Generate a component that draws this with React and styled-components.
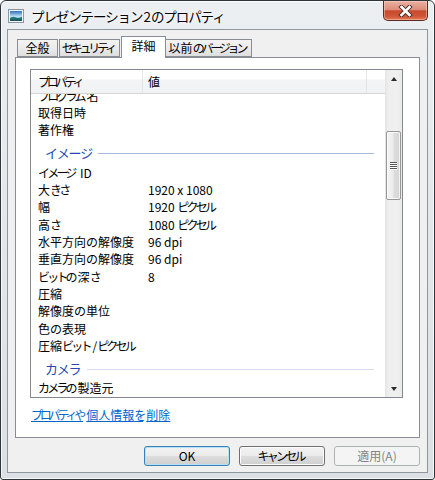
import styled, { createGlobalStyle } from "styled-components";

const GlobalStyle = createGlobalStyle`
  html, body {
    margin: 0;
    padding: 0;
    background: #ffffff;
  }
  body {
    font-family: "Noto Sans CJK JP", "Noto Sans", sans-serif;
    font-size: 12px;
    color: #000;
  }
  * {
    box-sizing: border-box;
  }
`;

// Meiryo UI draws kana much narrower than kanji; tighten kana runs to match
const Kana = styled.span`
  letter-spacing: ${(p) => p.$ls}px;
  margin-right: ${(p) => -p.$ls}px;
`;

const KANA_RUN = /([\u3040-\u30FF]+)/;

function Jp({ children, ls = -2.8 }) {
  return String(children)
    .split(KANA_RUN)
    .map((part, i) =>
      i % 2 === 1 ? (
        <Kana key={i} $ls={ls}>
          {part}
        </Kana>
      ) : (
        part
      )
    );
}

const Window = styled.div`
  width: 435px;
  height: 480px;
  border: 1px solid #30353a;
  border-radius: 6px 6px 3px 3px;
  background: linear-gradient(180deg, #eceff2 0%, #e4e7eb 40%, #dcdfe3 100%);
  box-shadow: inset 0 0 0 1px rgba(255, 255, 255, 0.75);
  display: flex;
  flex-direction: column;
  padding: 0 6px 6px 6px;
  overflow: hidden;
`;

const TitleBar = styled.div`
  height: 28px;
  display: flex;
  align-items: flex-start;
`;

const TitleIcon = styled.div`
  margin: 8px 0 0 1px;
  width: 16px;
  height: 14px;
  display: flex;
`;

const TitleText = styled.div`
  margin: 5px 0 0 7px;
  font-size: 13.5px;
  line-height: 20px;
  color: #000;
  white-space: nowrap;
  text-shadow: 0 0 6px #fff, 0 0 3px #fff;
`;

const CloseButton = styled.div`
  margin-left: auto;
  width: 45px;
  height: 20px;
  border: 1px solid #5b2a22;
  border-top: none;
  border-radius: 0 0 5px 5px;
  background: linear-gradient(
    180deg,
    #eab2a4 0%,
    #dd8d79 45%,
    #c84a2e 52%,
    #cf5637 80%,
    #e27a55 100%
  );
  box-shadow: inset 0 0 0 1px rgba(255, 220, 210, 0.45);
  display: flex;
  align-items: center;
  justify-content: center;
`;

const Client = styled.div`
  flex: 1;
  border: 1px solid #8e969e;
  background: #f0f0f0;
  display: flex;
  flex-direction: column;
  padding: 6px 7px 6px 7px;
`;

const TabRow = styled.div`
  height: 21px;
  display: flex;
  align-items: flex-end;
  position: relative;
  z-index: 1;
`;

const Tab = styled.div`
  width: ${(p) => p.$w}px;
  height: ${(p) => (p.$active ? 22 : 18)}px;
  margin-left: ${(p) => p.$ml}px;
  margin-bottom: ${(p) => (p.$active ? -1 : 0)}px;
  border: 1px solid #898c95;
  border-bottom: ${(p) => (p.$active ? "none" : "1px solid #898c95")};
  background: ${(p) =>
    p.$active ? "#ffffff" : "linear-gradient(180deg, #f3f3f3 0%, #ebebeb 50%, #dedede 100%)"};
  position: relative;
  z-index: ${(p) => (p.$active ? 2 : 1)};
  display: flex;
  align-items: center;
  justify-content: center;
  padding-bottom: ${(p) => (p.$active ? 3 : 0)}px;
  font-size: 12px;
  line-height: 14px;
  white-space: nowrap;
`;

const Panel = styled.div`
  flex: 1;
  border: 1px solid #898c95;
  background: #ffffff;
  padding: 11px 16px 0 14px;
  display: flex;
  flex-direction: column;
`;

const List = styled.div`
  height: 329px;
  border: 1px solid #828790;
  display: flex;
`;

const ListMain = styled.div`
  flex: 1;
  display: flex;
  flex-direction: column;
  overflow: hidden;
`;

const Header = styled.div`
  height: 24px;
  display: grid;
  grid-template-columns: 112px 224px 1fr;
  background: linear-gradient(180deg, #ffffff 0%, #ffffff 40%, #f3f4f6 42%, #f1f2f4 100%);
  border-bottom: 1px solid #d5d5d5;
  position: relative;
  z-index: 1;
`;

const HeaderCell = styled.div`
  border-right: ${(p) => (p.$last ? "none" : "1px solid #e3e5e8")};
  padding-left: ${(p) => p.$pad}px;
  display: flex;
  align-items: center;
  line-height: 14px;
  white-space: nowrap;
`;

const Body = styled.div`
  flex: 1;
  overflow: hidden;
`;

const Scrolled = styled.div`
  margin-top: ${(p) => -p.$offset}px;
`;

const Row = styled.div`
  height: 17.33px;
  display: grid;
  grid-template-columns: 112px 1fr;
  align-items: center;
  line-height: 16px;
  white-space: nowrap;
`;

const NameCell = styled.div`
  padding-left: 7px;
`;

const ValueCell = styled.div`
  padding-left: 5px;
`;

const Group = styled.div`
  height: 25px;
  display: flex;
  align-items: center;
  padding: 3px 11px 0 14px;
  gap: 5px;
  color: #2347b4;
  font-size: 13px;
  line-height: 16px;
`;

const GroupLine = styled.div`
  flex: 1;
  height: 1px;
  margin-top: 1px;
  background: ${(p) => (p.$focused ? "#a9badf" : "#d3dcef")};
`;

const ScrollBar = styled.div`
  width: 17px;
  display: flex;
  flex-direction: column;
  background: linear-gradient(90deg, #e4e4e4 0%, #eeeeee 20%, #f0f0f0 60%, #ebebeb 100%);
`;

const ArrowButton = styled.div`
  height: 17px;
  display: flex;
  align-items: center;
  justify-content: center;
`;

const Arrow = styled.span`
  width: 0;
  height: 0;
  border-left: 3.5px solid transparent;
  border-right: 3.5px solid transparent;
  border-${(p) => (p.$down ? "top" : "bottom")}: 4px solid #2a2a2a;
`;

const Track = styled.div`
  flex: 1;
  padding: 0 1px;
`;

const Thumb = styled.div`
  margin-top: ${(p) => p.$top}px;
  height: ${(p) => p.$size}px;
  border: 1px solid #979797;
  border-radius: 2px;
  background: linear-gradient(90deg, #f4f4f4 0%, #ececec 45%, #dcdcdc 55%, #d6d6d6 100%);
  box-shadow: inset 0 0 0 1px rgba(255, 255, 255, 0.7);
  display: flex;
  flex-direction: column;
  align-items: center;
  justify-content: center;
  gap: 1px;
`;

const Grip = styled.span`
  width: 7px;
  height: 1px;
  background: #555;
  box-shadow: 0 1px 0 #fff;
`;

const LinkArea = styled.div`
  flex: 1;
  display: flex;
  align-items: flex-start;
  padding: 9px 0 0 1px;
`;

const Link = styled.a`
  color: #0066cc;
  text-decoration: underline;
  font-size: 12px;
  line-height: 16px;
  white-space: nowrap;
  cursor: pointer;
`;

const ButtonRow = styled.div`
  margin-top: 8px;
  height: 20px;
  display: flex;
  justify-content: flex-end;
  gap: 9px;
`;

const Button = styled.button`
  width: 86px;
  height: 20px;
  padding: 0;
  font-family: inherit;
  font-size: 12px;
  line-height: 14px;
  border-radius: 3px;
  border: 1px solid ${(p) => (p.$default ? "#3c7fb1" : p.disabled ? "#adb2b5" : "#707070")};
  color: ${(p) => (p.disabled ? "#838383" : "#000")};
  background: ${(p) =>
    p.disabled
      ? "#f4f4f4"
      : "linear-gradient(180deg, #f2f2f2 0%, #ebebeb 50%, #dddddd 51%, #cfcfcf 100%)"};
  box-shadow: ${(p) =>
    p.$default
      ? "inset 0 0 0 1px #b3e0f9"
      : p.disabled
      ? "none"
      : "inset 0 0 0 1px #fcfcfc"};
`;

const sections = [
  {
    rows: [["プログラム名"], ["取得日時"], ["著作権"]],
  },
  {
    title: "イメージ",
    focused: true,
    rows: [
      ["イメージ ID"],
      ["大きさ", "1920 x 1080"],
      ["幅", "1920 ピクセル"],
      ["高さ", "1080 ピクセル"],
      ["水平方向の解像度", "96 dpi"],
      ["垂直方向の解像度", "96 dpi"],
      ["ビットの深さ", "8"],
      ["圧縮"],
      ["解像度の単位"],
      ["色の表現"],
      ["圧縮ビット/ピクセル"],
    ],
  },
  {
    title: "カメラ",
    rows: [["カメラの製造元"], ["カメラのモデル"]],
  },
];

const tabs = [
  { label: "全般", w: 41, ml: 2 },
  { label: "セキュリティ", w: 61, ml: 1 },
  { label: "詳細", w: 45, ml: 1, active: true },
  { label: "以前のバージョン", w: 87, ml: -1 },
];

function PictureIcon() {
  return (
    <svg width="16" height="14" viewBox="0 0 16 14">
      <defs>
        <linearGradient id="sky" x1="0" y1="0" x2="0" y2="1">
          <stop offset="0" stopColor="#2f6fbf" />
          <stop offset="0.55" stopColor="#bfe0f4" />
          <stop offset="1" stopColor="#e8f4fb" />
        </linearGradient>
        <linearGradient id="land" x1="0" y1="0" x2="0" y2="1">
          <stop offset="0" stopColor="#2c8a86" />
          <stop offset="1" stopColor="#14505a" />
        </linearGradient>
      </defs>
      <rect x="0.5" y="0.5" width="15" height="13" fill="#f4f6f8" stroke="#8a96a3" />
      <rect x="2" y="2" width="12" height="10" fill="url(#sky)" />
      <path d="M2 9 Q5 7 8 8.3 T14 7.6 V12 H2 Z" fill="url(#land)" />
    </svg>
  );
}

function CloseGlyph() {
  return (
    <svg width="15" height="12" viewBox="0 0 15 12">
      <path d="M3.5 2 L11.5 10 M11.5 2 L3.5 10" stroke="#4a2c28" strokeWidth="4.4" strokeLinecap="square" />
      <path d="M3.5 2 L11.5 10 M11.5 2 L3.5 10" stroke="#ffffff" strokeWidth="2.6" strokeLinecap="square" />
    </svg>
  );
}

export default function App() {
  return (
    <>
      <GlobalStyle />
      <Window>
        <TitleBar>
          <TitleIcon>
            <PictureIcon />
          </TitleIcon>
          <TitleText>
            <Jp ls={-1.1}>プレゼンテーション2のプロパティ</Jp>
          </TitleText>
          <CloseButton>
            <CloseGlyph />
          </CloseButton>
        </TitleBar>
        <Client>
          <TabRow>
            {tabs.map((t) => (
              <Tab key={t.label} $w={t.w} $ml={t.ml} $active={t.active}>
                <Jp ls={-3.2}>{t.label}</Jp>
              </Tab>
            ))}
          </TabRow>
          <Panel>
            <List>
              <ListMain>
                <Header>
                  <HeaderCell $pad={7}>
                    <Jp ls={-3.2}>プロパティ</Jp>
                  </HeaderCell>
                  <HeaderCell $pad={5}>値</HeaderCell>
                  <HeaderCell $last />
                </Header>
                <Body>
                  <Scrolled $offset={7}>
                    {sections.map((s, i) => (
                      <div key={i}>
                        {s.title && (
                          <Group>
                            <span>
                              <Jp ls={-1.2}>{s.title}</Jp>
                            </span>
                            <GroupLine $focused={s.focused} />
                          </Group>
                        )}
                        {s.rows.map(([name, value]) => (
                          <Row key={name}>
                            <NameCell>
                              <Jp>{name}</Jp>
                            </NameCell>
                            <ValueCell>{value && <Jp>{value}</Jp>}</ValueCell>
                          </Row>
                        ))}
                      </div>
                    ))}
                  </Scrolled>
                </Body>
              </ListMain>
              <ScrollBar>
                <ArrowButton>
                  <Arrow />
                </ArrowButton>
                <Track>
                  <Thumb $top={44} $size={69}>
                    <Grip />
                    <Grip />
                    <Grip />
                    <Grip />
                  </Thumb>
                </Track>
                <ArrowButton>
                  <Arrow $down />
                </ArrowButton>
              </ScrollBar>
            </List>
            <LinkArea>
              <Link>
                <Jp ls={-3.2}>プロパティや個人情報を削除</Jp>
              </Link>
            </LinkArea>
          </Panel>
          <ButtonRow>
            <Button $default>OK</Button>
            <Button>
              <Jp>キャンセル</Jp>
            </Button>
            <Button disabled>適用(A)</Button>
          </ButtonRow>
        </Client>
      </Window>
    </>
  );
}
